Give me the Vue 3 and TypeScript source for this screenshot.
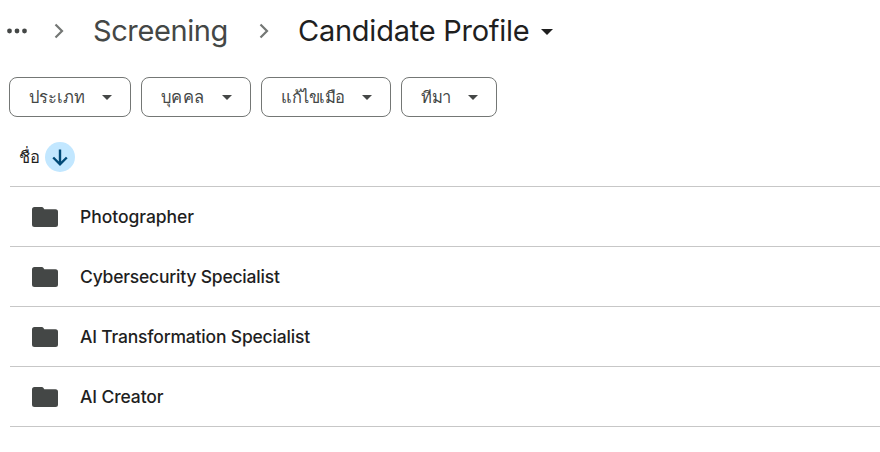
<script setup lang="ts">
const filters: { label: string; width: number; spacing: number }[] = [
  { label: 'ประเภท', width: 122, spacing: 0 },
  { label: 'บุคคล', width: 110, spacing: 0.3 },
  { label: 'แก้ไขเมือ', width: 130, spacing: -0.5 },
  { label: 'ทีมา', width: 96, spacing: -0.3 },
]
const folders: { name: string; spacing: number }[] = [
  { name: 'Photographer', spacing: -0.04 },
  { name: 'Cybersecurity Specialist', spacing: -0.21 },
  { name: 'AI Transformation Specialist', spacing: -0.19 },
  { name: 'AI Creator', spacing: -0.12 },
]
</script>

<template>
  <main class="drive">
    <nav class="crumbs">
      <svg class="dots" width="22" height="6" viewBox="0 0 22 6"><circle cx="3.500" cy="3" r="2.400" /><circle cx="11" cy="3" r="2.400" /><circle cx="18.500" cy="3" r="2.400" /></svg>
      <svg class="chev first" width="10" height="16" viewBox="0 0 10 16"><path d="M1.500 1.500 8 8l-6.500 6.500" /></svg>
      <span class="parent">Screening</span>
      <svg class="chev second" width="10" height="16" viewBox="0 0 10 16"><path d="M1.500 1.500 8 8l-6.500 6.500" /></svg>
      <span class="current">Candidate Profile</span>
      <svg class="arrow" width="12" height="6" viewBox="0 0 12 6"><path d="M0 0h12L6 6z" /></svg>
    </nav>
    <div class="filters">
      <button v-for="f in filters" :key="f.label" class="chip" :style="{ width: f.width + 'px', letterSpacing: f.spacing + 'px' }">
        <span>{{ f.label }}</span>
        <svg width="10" height="5" viewBox="0 0 10 5"><path d="M0 0h10L5 5z" /></svg>
      </button>
    </div>
    <div class="head">
      <span class="title">ชื่อ</span>
      <span class="sort"><svg width="16" height="17" viewBox="0 0 16 17"><path d="M8 0.500v15M1.200 8.500 8 15.300 14.800 8.500" /></svg></span>
    </div>
    <ul class="list">
      <li v-for="f in folders" :key="f.name">
        <svg width="26" height="20" viewBox="0 0 26 20"><path d="M2.500 0h7.300q1 0 1.500.8l1 1.500h11.200A2.500 2.500 0 0 1 26 4.800v12.700a2.500 2.500 0 0 1-2.500 2.500h-21A2.500 2.500 0 0 1 0 17.500v-15A2.500 2.500 0 0 1 2.500 0z" /></svg>
        <span :style="{ letterSpacing: f.spacing + 'px' }">{{ f.name }}</span>
      </li>
    </ul>
  </main>
</template>

<style>
body { background: #fff; }
</style>
<style scoped>
.drive { height: 452px; overflow: hidden; color: #1f1f1f; font-family: 'Google Sans', Inter, 'Noto Sans', sans-serif; }
.crumbs { height: 61px; display: flex; align-items: center; padding: 0 0 1px 6px; font-size: 29px; font-weight: 400; white-space: nowrap; }
.dots { fill: #444746; }
.chev { fill: none; stroke: #747775; stroke-width: 2.200; }
.first { margin-left: 26px; }
.parent { margin-left: 29px; width: 136px; color: #444746; letter-spacing: -0.400px; }
.second { margin-left: 30px; }
.current { margin-left: 29px; width: 232px; letter-spacing: -0.250px; }
.arrow { margin: 2px 0 0 11px; fill: #1f1f1f; }
.filters { display: flex; gap: 10px; padding: 15px 0 0 9px; }
.chip { box-sizing: border-box; height: 40px; padding: 0 18px 0 19px; display: flex; align-items: center; justify-content: space-between; border: 1px solid #747775; border-radius: 8px; background: #fff; color: #444746; font: 500 16.500px/30px 'Noto Sans', sans-serif; white-space: nowrap; }
.chip svg { fill: #444746; }
.head { height: 69px; padding: 25px 0 0 19px; box-sizing: border-box; display: flex; align-items: flex-start; font: 500 16.500px/30px 'Noto Sans', sans-serif; }
.title { width: 26px; letter-spacing: -0.200px; }
.sort { width: 30px; height: 30px; border-radius: 50%; background: #c2e7ff; display: grid; place-items: center; }
.sort path { fill: none; stroke: #004a77; stroke-width: 2.400; }
.list { list-style: none; margin: 0 0 0 10px; padding: 0; border-top: 1px solid #c7c7c7; }
li { height: 60px; box-sizing: border-box; padding-left: 22px; display: flex; align-items: center; gap: 22px; border-bottom: 1px solid #c7c7c7; font-size: 17.500px; font-weight: 500; }
li svg { fill: #444746; }
</style>
